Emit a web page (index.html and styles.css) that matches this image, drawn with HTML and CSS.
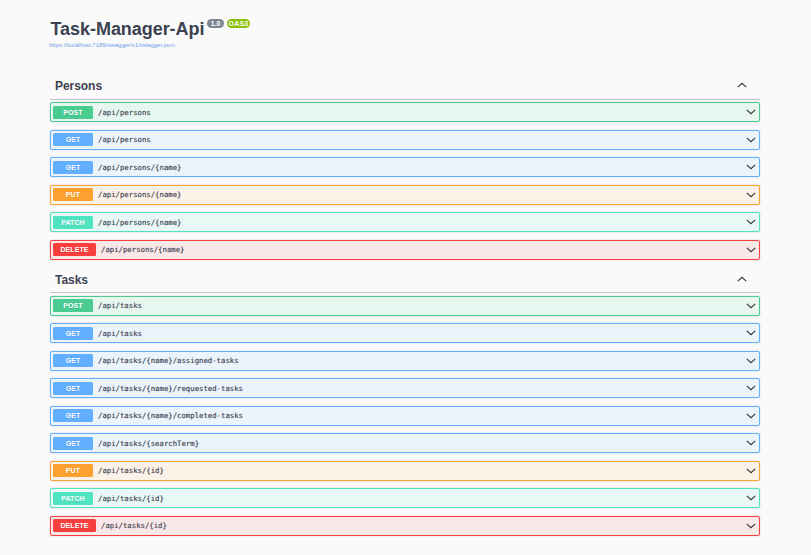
FILE: index.html
```html
<!DOCTYPE html>
<html lang="en">
<head>
<meta charset="utf-8">
<title>Task-Manager-Api</title>
<link rel="stylesheet" href="styles.css">
</head>
<body>
<svg class="sprite" width="0" height="0"><symbol id="down" viewBox="0 0 10 6"><path d="M.8.9 5 4.7 9.2.9"/></symbol><symbol id="up" viewBox="0 0 10 6"><path d="M.8 5.1 5 1.3 9.2 5.1"/></symbol></svg>
<main class="wrapper">
<header class="info">
<div class="heading"><h1>Task-Manager-Api</h1><span class="badge version">1.0</span><span class="badge oas">OAS3</span></div>
<a class="url">https://localhost:7189/swagger/v1/swagger.json</a>
</header>
<section>
<div class="tag"><h2>Persons</h2><svg class="arrow"><use href="#up"/></svg></div>
<div class="op post"><span class="method">POST</span><span class="path">/api/persons</span><svg class="arrow"><use href="#down"/></svg></div>
<div class="op get"><span class="method">GET</span><span class="path">/api/persons</span><svg class="arrow"><use href="#down"/></svg></div>
<div class="op get"><span class="method">GET</span><span class="path">/api/persons/{name}</span><svg class="arrow"><use href="#down"/></svg></div>
<div class="op put"><span class="method">PUT</span><span class="path">/api/persons/{name}</span><svg class="arrow"><use href="#down"/></svg></div>
<div class="op patch"><span class="method">PATCH</span><span class="path">/api/persons/{name}</span><svg class="arrow"><use href="#down"/></svg></div>
<div class="op delete"><span class="method">DELETE</span><span class="path">/api/persons/{name}</span><svg class="arrow"><use href="#down"/></svg></div>
</section>
<section>
<div class="tag"><h2>Tasks</h2><svg class="arrow"><use href="#up"/></svg></div>
<div class="op post"><span class="method">POST</span><span class="path">/api/tasks</span><svg class="arrow"><use href="#down"/></svg></div>
<div class="op get"><span class="method">GET</span><span class="path">/api/tasks</span><svg class="arrow"><use href="#down"/></svg></div>
<div class="op get"><span class="method">GET</span><span class="path">/api/tasks/{name}/assigned-tasks</span><svg class="arrow"><use href="#down"/></svg></div>
<div class="op get"><span class="method">GET</span><span class="path">/api/tasks/{name}/requested-tasks</span><svg class="arrow"><use href="#down"/></svg></div>
<div class="op get"><span class="method">GET</span><span class="path">/api/tasks/{name}/completed-tasks</span><svg class="arrow"><use href="#down"/></svg></div>
<div class="op get"><span class="method">GET</span><span class="path">/api/tasks/{searchTerm}</span><svg class="arrow"><use href="#down"/></svg></div>
<div class="op put"><span class="method">PUT</span><span class="path">/api/tasks/{id}</span><svg class="arrow"><use href="#down"/></svg></div>
<div class="op patch"><span class="method">PATCH</span><span class="path">/api/tasks/{id}</span><svg class="arrow"><use href="#down"/></svg></div>
<div class="op delete"><span class="method">DELETE</span><span class="path">/api/tasks/{id}</span><svg class="arrow"><use href="#down"/></svg></div>
</section>
</main>
</body>
</html>
```
FILE: styles.css
```css
* { box-sizing: border-box; }
body { margin: 0; height: 555px; overflow: hidden; background: #fafafa; color: #3b4151; font-family: "Liberation Sans", Arial, sans-serif; }
h1, h2 { margin: 0; }
.sprite { display: none; }
.wrapper { width: 710px; margin: 0 0 0 50px; padding-top: 18px; }
.info { height: 54px; }
.heading { display: flex; align-items: flex-start; height: 22px; }
h1 { width: 157px; padding-left: .5px; font-size: 18px; line-height: 22px; letter-spacing: -.05px; white-space: nowrap; }
.badge { height: 9px; margin-top: 1px; border-radius: 5px; color: #fff; font-size: 7px; font-weight: bold; line-height: 9px; text-align: center; white-space: nowrap; }
.version { width: 17px; background: #7d8492; }
.oas { width: 23px; margin-left: 3px; background: #89bf04; letter-spacing: .2px; }
.url { display: block; margin-left: -1px; color: #6f9fe6; font-size: 6px; line-height: 10px; white-space: nowrap; }
.tag { display: flex; align-items: center; justify-content: space-between; height: 28px; margin-bottom: 2.25px; padding: 0 13px 1px 5px; border-bottom: 1px solid #c0c2c5; }
h2 { padding-top: 2px; font-size: 12px; line-height: 16px; letter-spacing: -.05px; }
section + section .tag { height: 26px; margin-bottom: 2.5px; padding-bottom: 2px; }
.arrow { width: 10px; height: 6px; fill: none; stroke: #333; stroke-width: 1.1; }
.op { display: flex; align-items: center; height: 20px; margin-bottom: 7.5px; padding: 0 3px 0 2px; border: 1px solid var(--c); border-radius: 2px; background: var(--bg); box-shadow: 0 0 2px rgba(0, 0, 0, .19); }
.method { min-width: 40px; height: 13px; padding: 0 6px; border-radius: 1.5px; background: var(--c); color: #fff; font-size: 7px; font-weight: bold; line-height: 13px; letter-spacing: .1px; text-align: center; text-shadow: 0 1px 0 rgba(0, 0, 0, .1); }
.path { flex: 1; padding: 1px 0 0 5px; font-family: "DejaVu Sans Mono", monospace; font-size: 7.3px; line-height: 12px; white-space: nowrap; -webkit-text-stroke: .15px #3b4151; }
.post { --c: #49cc90; --bg: #e8f6f0; }
.get { --c: #61affe; --bg: #ebf3fb; }
.put { --c: #fca130; --bg: #fbf1e6; }
.patch { --c: #50e3c2; --bg: #e9f8f5; }
.delete { --c: #f93e3e; --bg: #fae7e7; }
.delete .method { width: 43px; padding: 0; }
```
